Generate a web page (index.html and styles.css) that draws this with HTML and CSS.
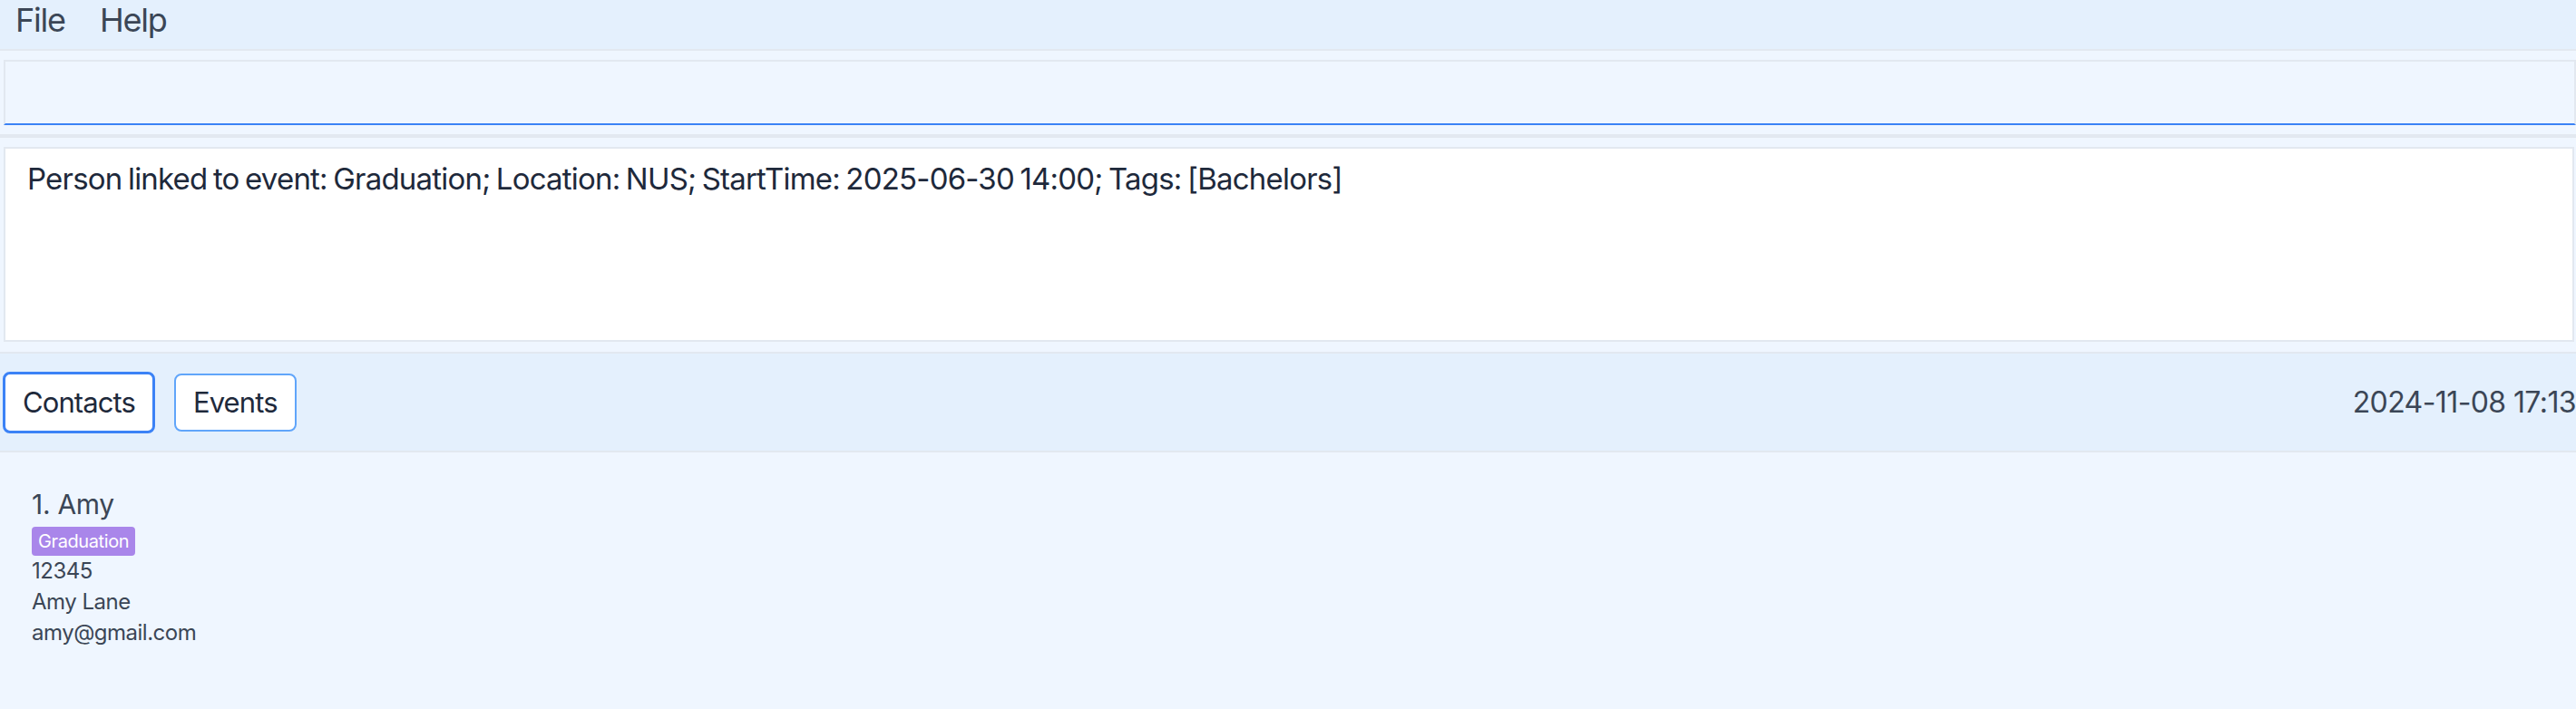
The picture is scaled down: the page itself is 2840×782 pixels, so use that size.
FILE: index.html
```html
<!DOCTYPE html>
<html lang="en">
<head>
<meta charset="utf-8">
<title>Address Book</title>
<link rel="stylesheet" href="styles.css">
</head>
<body>
<div class="app">
  <nav class="menubar">
    <span class="menu-item">File</span>
    <span class="menu-item">Help</span>
  </nav>
  <section class="command-wrap">
    <div class="command-box"></div>
  </section>
  <div class="splitter"></div>
  <section class="result-wrap">
    <div class="result-box">Person linked to event: Graduation; Location: NUS; StartTime: 2025-06-30 14:00; Tags: [Bachelors]</div>
  </section>
  <section class="tabbar">
    <div class="tabs">
      <button class="tab tab-active">Contacts</button>
      <button class="tab">Events</button>
    </div>
    <div class="clock">2024-11-08 17:13</div>
  </section>
  <section class="list">
    <div class="card">
      <div class="card-name">1. Amy</div>
      <div class="tags"><span class="tag">Graduation</span></div>
      <div class="card-line">12345</div>
      <div class="card-line">Amy Lane</div>
      <div class="card-line">amy@gmail.com</div>
    </div>
  </section>
</div>
</body>
</html>
```
FILE: styles.css
```css
* { box-sizing: border-box; }
html, body {
  margin: 0;
  padding: 0;
  height: 100%;
  overflow: hidden;
}
body {
  background: #eff6ff;
  font-family: Inter, "Noto Sans", sans-serif;
  color: #334155;
}
.app {
  display: flex;
  flex-direction: column;
  height: 100%;
}
.menubar {
  height: 56px;
  background: #e4f0fd;
  border-bottom: 2px solid #e2e8f0;
  display: flex;
  align-items: center;
  gap: 38px;
  padding-left: 17px;
}
.menu-item {
  font-size: 36px;
  letter-spacing: -1.2px;
  color: #3b4656;
  line-height: 1;
  margin-top: -10px;
}
.command-wrap {
  padding: 10px 0 10px 4px;
}
.command-box {
  height: 72px;
  background: #eff6ff;
  border: 2px solid #e2e8f0;
  border-bottom-color: #3b82f6;
}
.splitter {
  height: 4px;
  background: #e2e8f0;
}
.result-wrap {
  padding: 10px 2px 11px 4px;
}
.result-box {
  height: 215px;
  background: #ffffff;
  border: 2px solid #e2e8f0;
  padding: 13px 24px;
  font-size: 33px;
  color: #1e293b;
  letter-spacing: -0.8px;
  word-spacing: -2px;
}
.tabbar {
  height: 111px;
  background: #e4f0fd;
  border-top: 2px solid #e2e8f0;
  border-bottom: 2px solid #e2e8f0;
  display: flex;
  align-items: center;
  justify-content: space-between;
  padding-left: 3px;
}
.tabs {
  display: flex;
  align-items: center;
  gap: 21px;
}
.tab {
  font-family: Inter, "Noto Sans", sans-serif;
  font-size: 31px;
  letter-spacing: -0.9px;
  color: #1e293b;
  background: #ffffff;
  border: 2px solid #60a5fa;
  border-radius: 8px;
  height: 64px;
  padding: 0 19px;
}
.tab-active {
  height: 68px;
  border: 3px solid #3b82f6;
  padding: 0 19px;
}
.clock {
  font-size: 32px;
  letter-spacing: -0.6px;
  color: #3b4656;
  white-space: nowrap;
}
.list {
  flex: 1;
  background: #eff6ff;
  padding: 38px 35px;
}
.card-name {
  font-size: 30px;
  letter-spacing: -0.3px;
  color: #3b4656;
  line-height: 38px;
}
.tags {
  display: flex;
  margin-top: 6px;
}
.tag {
  background: #a986ea;
  color: #ffffff;
  font-size: 20px;
  letter-spacing: -0.4px;
  border-radius: 4px;
  padding: 0 7px;
  height: 32px;
  line-height: 32px;
}
.card-line {
  font-size: 24px;
  letter-spacing: -0.5px;
  color: #3b4656;
  line-height: 34px;
}
```
